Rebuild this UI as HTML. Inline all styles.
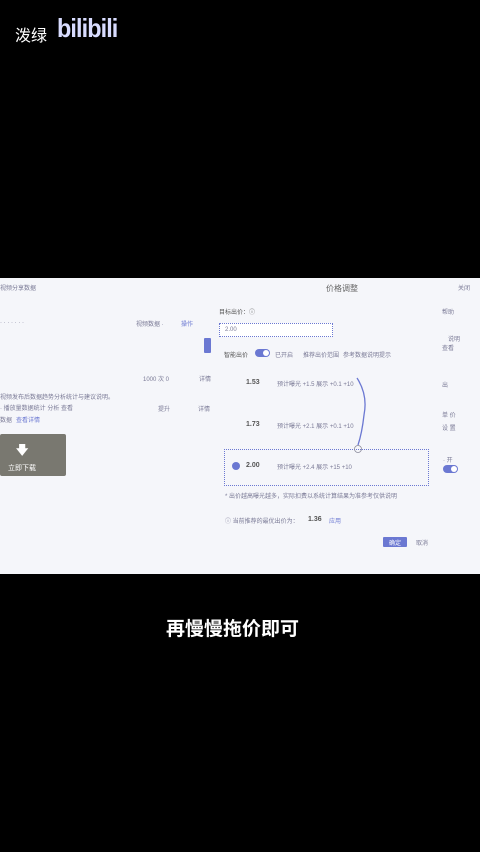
<!DOCTYPE html>
<html><head><meta charset="utf-8">
<style>
*{margin:0;padding:0;box-sizing:border-box}
body{width:480px;height:852px;background:#000;position:relative;overflow:hidden;font-family:"Liberation Sans","Noto Sans CJK SC",sans-serif}
.a{position:absolute;white-space:nowrap}
.g{color:#7a7a96;font-size:6px}
.b{color:#6b78d2;font-size:6px}
.d{color:#555;font-size:7px;font-weight:bold}
</style></head><body>
<div class="a" style="left:15px;top:22px;color:#fff;font-size:16px">泼绿</div>
<div class="a" style="left:57px;top:13px;color:#d8dcff;font-size:26px;font-weight:bold;letter-spacing:-1px;font-family:'Liberation Sans',sans-serif;transform:scaleX(0.9);transform-origin:left">bilibili</div>

<div class="a" style="left:0;top:278px;width:480px;height:296px;background:#f5f6fa"></div>
<div class="a g" style="left:0;top:283px">视频分享数据</div>
<div class="a" style="left:326px;top:283px;color:#666;font-size:8px">价格调整</div>
<div class="a g" style="left:458px;top:283px">关闭</div>

<div class="a g" style="left:0;top:320px">· · ·  · · · ·</div>
<div class="a g" style="left:136px;top:319px">视频数据 ·</div>
<div class="a b" style="left:181px;top:319px">操作</div>
<div class="a" style="left:204px;top:338px;width:7px;height:15px;background:#6b78d2;border-radius:1px"></div>
<div class="a g" style="left:143px;top:374px">1000 次 0</div>
<div class="a g" style="left:199px;top:374px">详情</div>
<div class="a g" style="left:0;top:392px">视频发布后数据趋势分析统计与建议说明。</div>
<div class="a g" style="left:0;top:403px">· 播放量数据统计  分析  查看</div>
<div class="a g" style="left:158px;top:404px">提升</div>
<div class="a g" style="left:198px;top:404px">详情</div>
<div class="a g" style="left:0;top:415px">数据</div>
<div class="a b" style="left:16px;top:415px">查看详情</div>
<div class="a" style="left:0;top:434px;width:66px;height:42px;background:#797870;border-radius:2px"></div>
<div class="a" style="left:16px;top:441px;color:#fff;font-size:12px;font-weight:bold">🡇</div>
<div class="a" style="left:8px;top:463px;color:#fff;font-size:7px">立即下载</div>

<div class="a g" style="left:219px;top:307px;color:#555">目标出价：ⓘ</div>
<div class="a" style="left:219px;top:323px;width:114px;height:14px;border:1px dotted #6b78d2;background:#fff"></div>
<div class="a g" style="left:225px;top:327px">2.00</div>
<div class="a g" style="left:224px;top:350px;color:#555">智能出价</div>
<div class="a" style="left:255px;top:349px;width:15px;height:8px;background:#6b78d2;border-radius:4px"></div>
<div class="a" style="left:263px;top:350px;width:6px;height:6px;background:#fff;border-radius:3px"></div>
<div class="a g" style="left:275px;top:350px">已开启</div>
<div class="a g" style="left:303px;top:350px">推荐出价范围</div>
<div class="a g" style="left:343px;top:350px">参考数据说明提示</div>

<div class="a d" style="left:246px;top:379px">1.53</div>
<div class="a g" style="left:277px;top:379px">预计曝光 +1.5  展示 +0.1 +10</div>
<div class="a d" style="left:246px;top:421px">1.73</div>
<div class="a g" style="left:277px;top:421px">预计曝光 +2.1  展示 +0.1 +10</div>
<div class="a" style="left:224px;top:449px;width:205px;height:37px;border:1px dotted #6b78d2"></div>
<div class="a" style="left:232px;top:462px;width:8px;height:8px;background:#6b78d2;border-radius:50%"></div>
<div class="a d" style="left:246px;top:462px">2.00</div>
<div class="a g" style="left:277px;top:462px">预计曝光 +2.4  展示 +15 +10</div>
<svg class="a" style="left:350px;top:375px" width="20" height="80"><path d="M7 3 Q18 20 14 40 Q12 58 8 70" fill="none" stroke="#6b78d2" stroke-width="1.3"/><circle cx="8" cy="74" r="3.5" fill="none" stroke="#8a8a9a" stroke-width="0.8"/></svg>
<div class="a g" style="left:225px;top:491px">* 出价越高曝光越多，实际扣费以系统计算结果为准参考仅供说明</div>
<div class="a g" style="left:225px;top:516px">ⓘ 当前推荐的最优出价为：</div>
<div class="a d" style="left:308px;top:516px">1.36</div>
<div class="a b" style="left:329px;top:516px">应用</div>
<div class="a" style="left:383px;top:537px;width:24px;height:10px;background:#6b78d2;border-radius:1px"></div>
<div class="a" style="left:389px;top:538px;color:#fff;font-size:6px">确定</div>
<div class="a g" style="left:416px;top:538px">取消</div>

<div class="a g" style="left:442px;top:307px">帮助</div>
<div class="a g" style="left:448px;top:334px">说明</div>
<div class="a g" style="left:442px;top:343px">查看</div>
<div class="a g" style="left:442px;top:380px">出</div>
<div class="a g" style="left:442px;top:410px">单 价</div>
<div class="a g" style="left:442px;top:423px">设 置</div>
<div class="a g" style="left:443px;top:455px">· 开</div>
<div class="a" style="left:443px;top:465px;width:15px;height:8px;background:#6b78d2;border-radius:4px"></div>
<div class="a" style="left:451px;top:466px;width:6px;height:6px;background:#fff;border-radius:3px"></div>

<div class="a" style="left:166px;top:614px;color:#fff;font-size:19px;font-weight:bold">再慢慢拖价即可</div>
</body></html>
